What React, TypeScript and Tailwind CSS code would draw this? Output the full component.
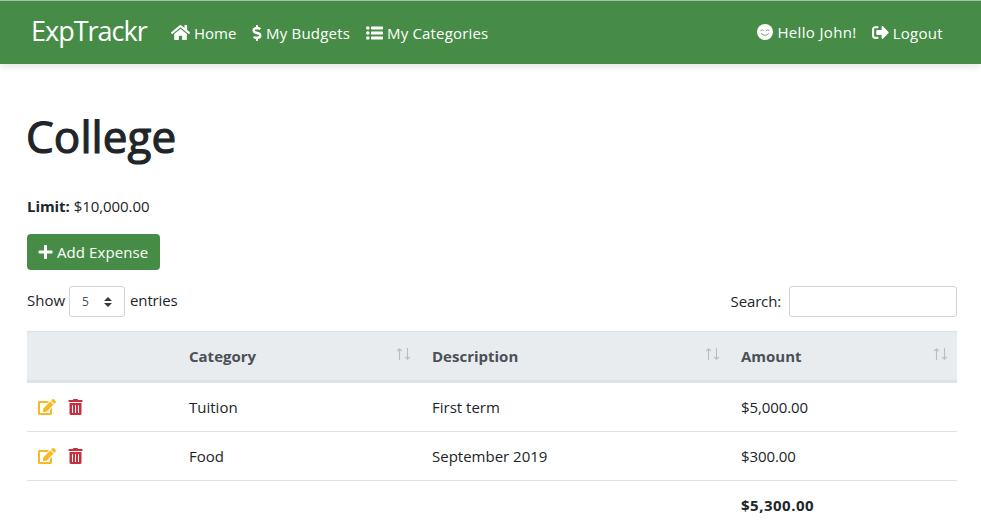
import type { ReactNode } from "react";
import { FaHome, FaDollarSign, FaSignOutAlt, FaPlus, FaEdit, FaTrashAlt } from "react-icons/fa";

function NavLink({ icon, children, className = "" }: { icon: ReactNode; children: ReactNode; className?: string }) {
  return (
    <a className={`flex h-6 items-center whitespace-nowrap ${className}`}>
      {icon}
      <span className="ml-1">{children}</span>
    </a>
  );
}

function ListIcon() {
  return (
    <svg className="h-4 w-[17px] shrink-0" viewBox="0 0 17 16" fill="currentColor">
      <circle cx="1.8" cy="3" r="1.8" />
      <circle cx="1.8" cy="8" r="1.8" />
      <circle cx="1.8" cy="13" r="1.8" />
      <rect x="5" y="1.6" width="12" height="2.8" rx=".6" />
      <rect x="5" y="6.6" width="12" height="2.8" rx=".6" />
      <rect x="5" y="11.6" width="12" height="2.8" rx=".6" />
    </svg>
  );
}

function SmileIcon() {
  return (
    <svg className="h-4 w-4 shrink-0" viewBox="0 0 16 16" fill="none" stroke="#6c9d6c" strokeWidth=".9" strokeLinecap="round">
      <circle cx="8" cy="8" r="8" fill="white" stroke="none" />
      <path d="M3.8 6.4Q5.2 4.9 6.6 6.4M9.4 6.4Q10.8 4.9 12.2 6.4M4.3 9.6Q8 13.4 11.7 9.6" />
    </svg>
  );
}

function SortArrows() {
  return (
    <svg className="-mt-1 h-3 w-4 shrink-0 text-[#b9bcbf]" viewBox="0 0 16 12" fill="none" stroke="currentColor" strokeWidth="1.1">
      <path d="M3.5 12V1M1 3.2L3.5 .8L6 3.2M11.5 0V11M9 8.8L11.5 11.2L14 8.8" />
    </svg>
  );
}

function HeaderCell({ children }: { children: ReactNode }) {
  return (
    <div className="flex items-center justify-between pl-3 pr-2">
      <span>{children}</span>
      <SortArrows />
    </div>
  );
}

const rows = [
  { category: "Tuition", description: "First term", amount: "$5,000.00" },
  { category: "Food", description: "September 2019", amount: "$300.00" },
];

export default function App() {
  return (
    <div className="h-[526px] w-[981px] overflow-hidden bg-white font-['Open_Sans','Noto_Sans',sans-serif] text-[15px] leading-6 text-[#212529]">
      <nav className="flex h-16 items-center border-t border-[#a5c3a7] bg-[#468c46] pl-[31px] pr-[38px] text-white shadow-[0_2px_8px_rgba(0,0,0,0.12)]">
        <a className="mb-1 mr-6 w-[116px] whitespace-nowrap text-[27px] leading-8 tracking-[-1px]">ExpTrackr</a>
        <NavLink className="w-[81px]" icon={<FaHome className="h-[17px] w-[19px]" />}>Home</NavLink>
        <NavLink className="w-[114px] tracking-[0.2px]" icon={<FaDollarSign className="h-4 w-[10px]" />}>My Budgets</NavLink>
        <NavLink className="tracking-[0.18px]" icon={<ListIcon />}>My Categories</NavLink>
        <div className="flex-1" />
        <NavLink className="mb-[2px] mr-[15px] tracking-[0.35px]" icon={<SmileIcon />}>Hello John!</NavLink>
        <NavLink className="tracking-[0.3px]" icon={<FaSignOutAlt className="h-[17px] w-[17px]" />}>Logout</NavLink>
      </nav>
      <main className="pl-[27px] pr-6 pt-[45px]">
        <h1 className="-ml-px h-[54px] text-[44px] leading-[54px] tracking-[0.1px] [-webkit-text-stroke:1.2px_#212529]">College</h1>
        <p className="mt-[31px] h-6 tracking-[-0.06px]"><b>Limit:</b> $10,000.00</p>
        <button className="mt-4 flex h-9 w-[133px] items-center whitespace-nowrap rounded bg-[#468c46] pl-[11px] tracking-[0.08px] text-white">
          <FaPlus className="mr-1 h-4 w-[15px]" />
          Add Expense
        </button>
        <div className="mt-4 flex h-[31px] items-center justify-between">
          <div className="flex items-center">
            <span className="mb-[3px] w-[42px]">Show</span>
            <div className="mr-[5px] flex h-[31px] w-14 items-center justify-between rounded-[3px] border border-[#ced4da] pl-3 pr-3 text-xs text-[#495057]">
              <span className="mt-px">5</span>
              <svg className="h-[10px] w-2 text-[#343a40]" viewBox="0 0 8 10" fill="currentColor"><path d="M0 4L4 0L8 4ZM0 6H8L4 10Z" /></svg>
            </div>
            <span className="mb-[3px] tracking-[-0.12px]">entries</span>
          </div>
          <label className="flex items-center">
            <span className="mb-[2px] tracking-[-0.15px]">Search:</span>
            <input className="ml-2 h-[31px] w-[168px] rounded-[3px] border border-[#ced4da]" />
          </label>
        </div>
        <div className="mt-[14px]">
          <div className="grid h-[52px] grid-cols-[150px_243px_309px_228px] items-center border-b-[3px] border-t border-[#dee2e6] bg-[#e9ecef] font-bold text-[#495057]">
            <div />
            <HeaderCell>Category</HeaderCell>
            <HeaderCell>Description</HeaderCell>
            <HeaderCell>Amount</HeaderCell>
          </div>
          {rows.map((row) => (
            <div key={row.category} className="grid h-[49px] grid-cols-[150px_243px_309px_228px] items-center border-b border-[#dee2e6]">
              <div className="flex items-center pl-[11px]">
                <FaEdit className="mr-3 h-4 w-[18px] text-[#f7b924]" />
                <FaTrashAlt className="h-4 w-[15px] text-[#c9303e]" />
              </div>
              <div className="pl-3">{row.category}</div>
              <div className="pl-3">{row.description}</div>
              <div className="pl-3 tracking-[-0.1px]">{row.amount}</div>
            </div>
          ))}
          <div className="grid h-[47px] grid-cols-[702px_228px] items-center font-bold">
            <div />
            <div className="pl-3 tracking-[0.5px]">$5,300.00</div>
          </div>
        </div>
      </main>
    </div>
  );
}
